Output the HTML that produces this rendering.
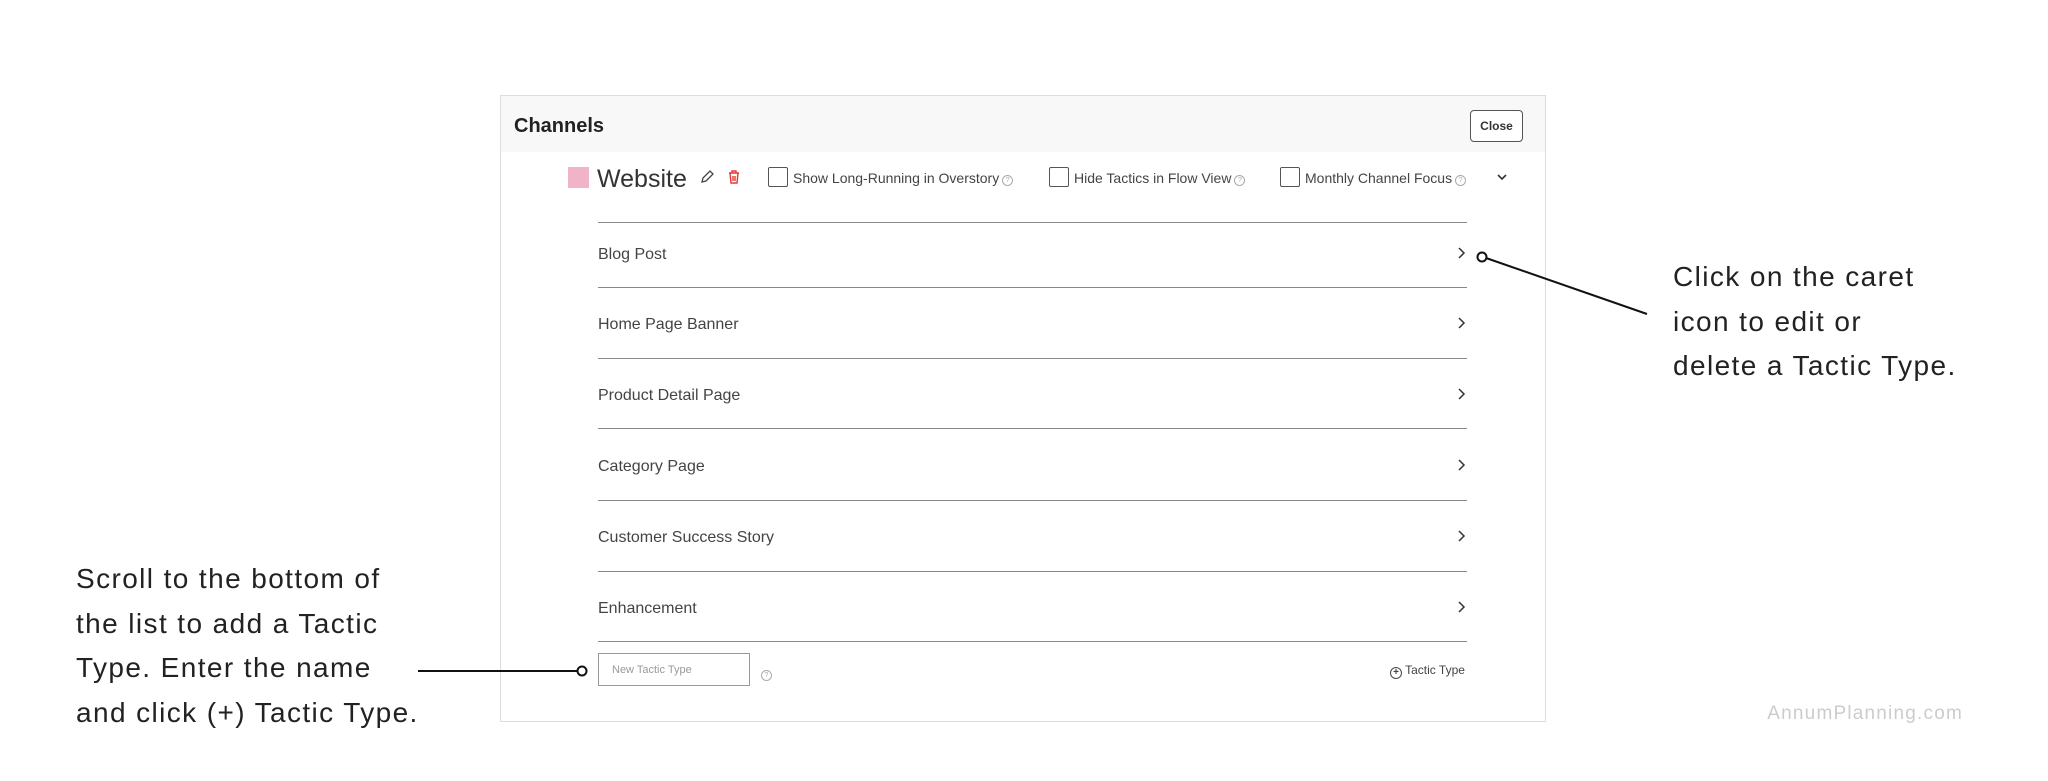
<!DOCTYPE html>
<html><head><meta charset="utf-8"><style>
body{margin:0;width:2048px;height:781px;background:#fff;font-family:"Liberation Sans",sans-serif;position:relative;overflow:hidden}
.a{position:absolute;white-space:nowrap}
.box{position:absolute;left:500px;top:95px;width:1044px;height:625px;border:1px solid #ddd;background:#fff}
.hdr{position:absolute;left:0;top:0;width:100%;height:56px;background:#f8f8f8}
.line{position:absolute;left:598px;width:869px;height:1px;background:#888}
.row{position:absolute;left:598px;font-size:16px;color:#444;transform:translateY(-50%)}
.car{position:absolute;left:1456px}
.cb{position:absolute;width:18px;height:18px;border:1.5px solid #555;border-radius:2px;top:167px}
.cbt{position:absolute;top:170px;font-size:14px;color:#444}
.q{display:inline-block;width:9px;height:9px;border:1px solid #aaa;border-radius:50%;font-size:7px;line-height:9px;text-align:center;color:#aaa;vertical-align:1px;margin-left:3px}
.ann{position:absolute;font-size:28px;line-height:44.5px;color:#222;letter-spacing:1.4px;white-space:nowrap}
</style></head><body>
<div class="box"><div class="hdr"></div></div>
<div class="a" style="left:514px;top:115px;font-size:20px;font-weight:bold;color:#222">Channels</div>
<div class="a" style="left:1470px;top:110px;width:51px;height:30px;border:1.5px solid #555;border-radius:4px;font-size:12px;font-weight:bold;line-height:30px;text-align:center;color:#333;background:#fff">Close</div>
<div class="a" style="left:568px;top:167px;width:21px;height:21px;background:#f0b3c8"></div>
<div class="a" style="left:597px;top:165px;font-size:25px;color:#333">Website</div>
<svg class="a" style="left:699px;top:169px" width="16" height="16" viewBox="0 0 16 16"><path d="M3 13 L4 9 L11 2 L14 5 L7 12 Z" fill="none" stroke="#444" stroke-width="1.3"/></svg>
<svg class="a" style="left:727px;top:169px" width="14" height="16" viewBox="0 0 14 16"><path d="M2 4h10M5 4V2h4v2M3 4l1 10h6l1-10M6 7v5M8 7v5" fill="none" stroke="#e53935" stroke-width="1.4"/></svg>
<div class="cb" style="left:768px"></div><div class="cbt" style="left:793px">Show Long-Running in Overstory<span class="q">?</span></div>
<div class="cb" style="left:1049px"></div><div class="cbt" style="left:1074px">Hide Tactics in Flow View<span class="q">?</span></div>
<div class="cb" style="left:1280px"></div><div class="cbt" style="left:1305px">Monthly Channel Focus<span class="q">?</span></div>
<svg class="a" style="left:1496px;top:173px" width="12" height="8" viewBox="0 0 12 8"><path d="M2 2l4 4 4-4" fill="none" stroke="#333" stroke-width="1.6"/></svg>
<div class="line" style="top:222px"></div>
<div class="line" style="top:287px"></div>
<div class="line" style="top:358px"></div>
<div class="line" style="top:428px"></div>
<div class="line" style="top:500px"></div>
<div class="line" style="top:571px"></div>
<div class="line" style="top:641px"></div>
<div class="row" style="top:255px">Blog Post</div>
<div class="row" style="top:325px">Home Page Banner</div>
<div class="row" style="top:396px">Product Detail Page</div>
<div class="row" style="top:467px">Category Page</div>
<div class="row" style="top:538px">Customer Success Story</div>
<div class="row" style="top:609px">Enhancement</div>
<svg class="car" style="top:246px" width="10" height="14" viewBox="0 0 10 14"><path d="M3 2l5 5-5 5" fill="none" stroke="#333" stroke-width="1.5"/></svg>
<svg class="car" style="top:316px" width="10" height="14" viewBox="0 0 10 14"><path d="M3 2l5 5-5 5" fill="none" stroke="#333" stroke-width="1.5"/></svg>
<svg class="car" style="top:387px" width="10" height="14" viewBox="0 0 10 14"><path d="M3 2l5 5-5 5" fill="none" stroke="#333" stroke-width="1.5"/></svg>
<svg class="car" style="top:458px" width="10" height="14" viewBox="0 0 10 14"><path d="M3 2l5 5-5 5" fill="none" stroke="#333" stroke-width="1.5"/></svg>
<svg class="car" style="top:529px" width="10" height="14" viewBox="0 0 10 14"><path d="M3 2l5 5-5 5" fill="none" stroke="#333" stroke-width="1.5"/></svg>
<svg class="car" style="top:600px" width="10" height="14" viewBox="0 0 10 14"><path d="M3 2l5 5-5 5" fill="none" stroke="#333" stroke-width="1.5"/></svg>
<div class="a" style="left:598px;top:653px;width:152px;height:33px;border:1px solid #999;box-sizing:border-box;font-size:11px;color:#999;line-height:33px;padding-left:13px">New Tactic Type</div>
<div class="a" style="left:761px;top:665px"><span class="q" style="margin:0">?</span></div>
<div class="a" style="left:1390px;top:663px;font-size:12px;color:#444"><span style="display:inline-block;width:10px;height:10px;border:1.3px solid #444;border-radius:50%;font-size:10px;line-height:10px;text-align:center;vertical-align:-1px;font-weight:bold">+</span> Tactic Type</div>
<svg class="a" style="left:0;top:0" width="2048" height="781">
<line x1="1486" y1="258" x2="1647" y2="314" stroke="#111" stroke-width="2"/>
<circle cx="1482" cy="257" r="4.5" fill="#fff" stroke="#111" stroke-width="2"/>
<line x1="418" y1="671" x2="577" y2="671" stroke="#111" stroke-width="2"/>
<circle cx="582" cy="671" r="4.5" fill="#fff" stroke="#111" stroke-width="2"/>
</svg>
<div class="ann" style="left:1673px;top:255px">Click on the caret<br>icon to edit or<br>delete a Tactic Type.</div>
<div class="ann" style="left:76px;top:557px">Scroll to the bottom of<br>the list to add a Tactic<br>Type. Enter the name<br>and click (+) Tactic Type.</div>
<div class="a" style="left:1700px;top:703px;font-size:19px;color:#ccc;width:263px;text-align:right;letter-spacing:1.2px">AnnumPlanning.com</div>
</body></html>
